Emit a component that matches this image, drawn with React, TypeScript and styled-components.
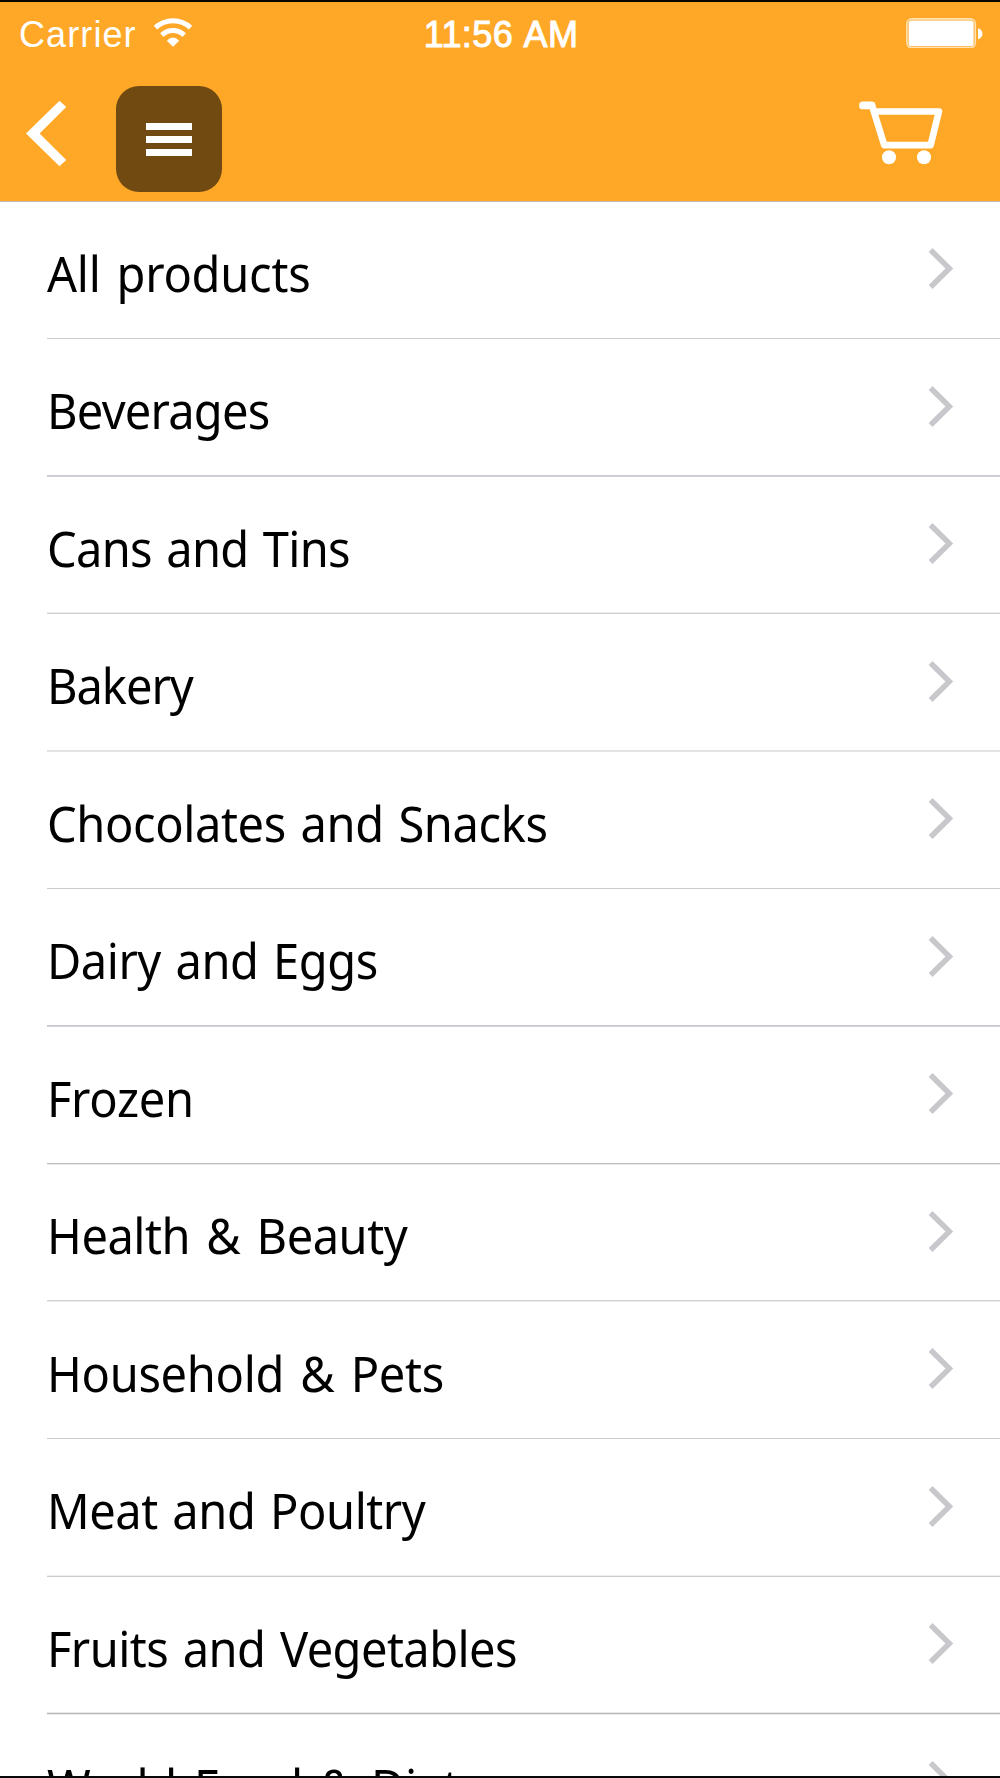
import React from 'react';
import styled, { createGlobalStyle } from 'styled-components';

const GlobalStyle = createGlobalStyle`
  * { box-sizing: border-box; }
  body { margin: 0; background: #fff; }
`;

const Screen = styled.div`
  display: flex;
  flex-direction: column;
  width: 1000px;
  height: 1778px;
  overflow: hidden;
  background: #fff;
  border-top: 2px solid #0a0600;
  border-bottom: 2px solid #08080a;
`;

const Header = styled.header`
  flex: none;
  height: 200px;
  background: #ffa827;
  border-bottom: 1px solid #c3b9bd;
  color: #fff;
`;

const StatusBar = styled.div`
  display: grid;
  grid-template-columns: 1fr auto 1fr;
  height: 62px;
  padding: 12px 17px 0 19px;
  font: 36px/42px "Liberation Sans", Arial, sans-serif;
`;

const Signal = styled.div`
  display: flex;
  gap: 16px;
`;

const Carrier = styled.span`
  width: 117px;
  letter-spacing: 1.1px;
  white-space: nowrap;
`;

const WifiIcon = styled.svg`
  width: 42px;
  height: 34px;
`;

const Clock = styled.span`
  -webkit-text-stroke: 1px #fff;
  letter-spacing: 0.4px;
  word-spacing: 2px;
  white-space: nowrap;
`;

const Battery = styled.svg`
  width: 78px;
  height: 34px;
  justify-self: end;
`;

const NavBar = styled.nav`
  display: flex;
  align-items: flex-start;
  padding: 22px 54px 0 22px;
`;

const IconButton = styled.button<{ $w: number; $h: number; $top?: number }>`
  display: flex;
  width: ${(p) => p.$w}px;
  height: ${(p) => p.$h}px;
  margin: ${(p) => p.$top ?? 0}px 0 0;
  padding: 0;
  border: 0;
  background: none;
  color: #fff;
`;

const MenuButton = styled.button`
  display: flex;
  flex-direction: column;
  align-items: center;
  justify-content: center;
  gap: 6px;
  width: 106px;
  height: 106px;
  margin: 0 auto 0 44px;
  padding: 1px 0 0;
  border: 0;
  border-radius: 23px;
  background: #704a11;
`;

const Bar = styled.span`
  width: 46px;
  height: 7px;
  background: #fff;
`;

const List = styled.ul`
  flex: none;
  margin: 0;
  padding: 0;
  list-style: none;
`;

const Row = styled.li<{ $tall: boolean }>`
  display: flex;
  flex-direction: column;
  justify-content: space-between;
  height: ${(p) => (p.$tall ? 138 : 137)}px;
  padding-left: 47px;
`;

const RowBody = styled.div`
  display: flex;
  align-items: flex-start;
  justify-content: space-between;
  padding-right: 46px;
`;

const Label = styled.span<{ $tracking: number; $words?: number; $tall: boolean }>`
  margin-top: ${(p) => (p.$tall ? 41 : 40)}px;
  font: 49px/60px "Noto Sans", "Segoe UI", sans-serif;
  letter-spacing: ${(p) => p.$tracking}px;
  word-spacing: ${(p) => p.$words ?? 3}px;
  white-space: nowrap;
  color: #000;
  transform: scaleX(0.96);
  transform-origin: left;
`;

const Chevron = styled.svg`
  width: 26px;
  height: 44px;
  margin-top: 44px;
`;

const Rule = styled.div<{ $shades: string[] }>`
  height: 3px;
  background: linear-gradient(
    ${(p) => p.$shades.map((c, i) => `${c} ${i}px ${i + 1}px`).join(', ')}
  );
`;

const W = '#fff';

interface Category {
  name: string;
  tracking: number;
  words?: number;
  rule: string[];
}

const categories: Category[] = [
  { name: 'All products', tracking: -0.25, words: 4, rule: [W, '#cfcfd1', W] },
  { name: 'Beverages', tracking: -0.8, rule: [W, '#cdccd3', '#d2d1d7'] },
  { name: 'Cans and Tins', tracking: -0.75, rule: ['#ececec', '#cfcfd2', W] },
  { name: 'Bakery', tracking: -1.1, rule: [W, '#e1e1e2', '#e4e4e5'] },
  { name: 'Chocolates and Snacks', tracking: -0.42, rule: [W, '#cbcbd0', W] },
  { name: 'Dairy and Eggs', tracking: -0.5, rule: [W, '#c8c8cd', '#d2d2d8'] },
  { name: 'Frozen', tracking: -0.33, rule: [W, '#bcbcc1', '#eaeaec'] },
  { name: 'Health & Beauty', tracking: -0.5, words: 4.7, rule: [W, '#d1d1d3', '#eeeeee'] },
  { name: 'Household & Pets', tracking: -0.34, words: 4.5, rule: [W, '#cbcbcb', W] },
  { name: 'Meat and Poultry', tracking: -0.48, rule: [W, '#eeeef0', '#cccccf'] },
  { name: 'Fruits and Vegetables', tracking: -0.59, rule: ['#e8e8e8', '#b9b9b9', '#e8e8e8'] },
  { name: 'World Food & Diet', tracking: -0.4, words: 5.5, rule: [W, '#cfcfd1', W] },
];

export default function App() {
  return (
    <>
      <GlobalStyle />
      <Screen>
        <Header>
          <StatusBar>
            <Signal>
              <Carrier>Carrier</Carrier>
              <WifiIcon viewBox="151.5 13.7 42 34" fill="none" stroke="#fff" strokeWidth="5">
                <path d="M155 27.3a25.5 25.5 0 0 1 35 0" />
                <path d="M161.3 34.8a16.2 16.2 0 0 1 22.4 0" />
                <path d="M166.3 40.4Q172.5 34 178.7 40.4L172.5 46.4Z" fill="#fff" stroke="none" />
              </WifiIcon>
            </Signal>
            <Clock>11:56 AM</Clock>
            <Battery viewBox="905 14 78 34">
              <rect x="906.9" y="18.9" width="68.4" height="28.8" rx="4.6" fill="none" stroke="#ffe2b5" strokeWidth="1.6" />
              <rect x="908.6" y="20.4" width="65" height="25.8" rx="2.8" fill="#fff" />
              <path d="M978 28.3c6 1.5 6 9.5 0 11Z" fill="#fff" />
            </Battery>
          </StatusBar>
          <NavBar>
            <IconButton $w={50} $h={70} $top={12} aria-label="Back">
              <svg width="50" height="70" viewBox="22 98 50 70">
                <path d="M59.5 100.7L66.2 107L39.6 133.5L66.2 160L59.5 166.3L26 133.5Z" fill="#fff" />
              </svg>
            </IconButton>
            <MenuButton aria-label="Menu">
              <Bar />
              <Bar />
              <Bar />
            </MenuButton>
            <IconButton $w={90} $h={68} $top={12} aria-label="Cart">
              <svg width="90" height="68" viewBox="856 98 90 68" fill="none" stroke="#fff" strokeLinecap="round" strokeLinejoin="round">
                <path d="M863 105.4H871.5" strokeWidth="7.8" />
                <path d="M872 105.5L884.3 145.2H930.6L938.9 111.5H875" strokeWidth="6.7" />
                <circle cx="889" cy="157.2" r="7" fill="#fff" stroke="none" />
                <circle cx="924" cy="157.2" r="7" fill="#fff" stroke="none" />
              </svg>
            </IconButton>
          </NavBar>
        </Header>
        <List>
          {categories.map((c, i) => (
            <Row key={c.name} $tall={i % 2 === 0}>
              <RowBody>
                <Label
                  $tracking={c.tracking}
                  $words={c.words}
                  $tall={i % 2 === 0 || i === categories.length - 1}
                >
                  {c.name}
                </Label>
                <Chevron viewBox="928 246 26 44" fill="none" stroke="#c7c7cc" strokeWidth="5.4">
                  <path d="M930.6 250L949.4 268.5L930.6 287" />
                </Chevron>
              </RowBody>
              <Rule $shades={c.rule} />
            </Row>
          ))}
        </List>
      </Screen>
    </>
  );
}
